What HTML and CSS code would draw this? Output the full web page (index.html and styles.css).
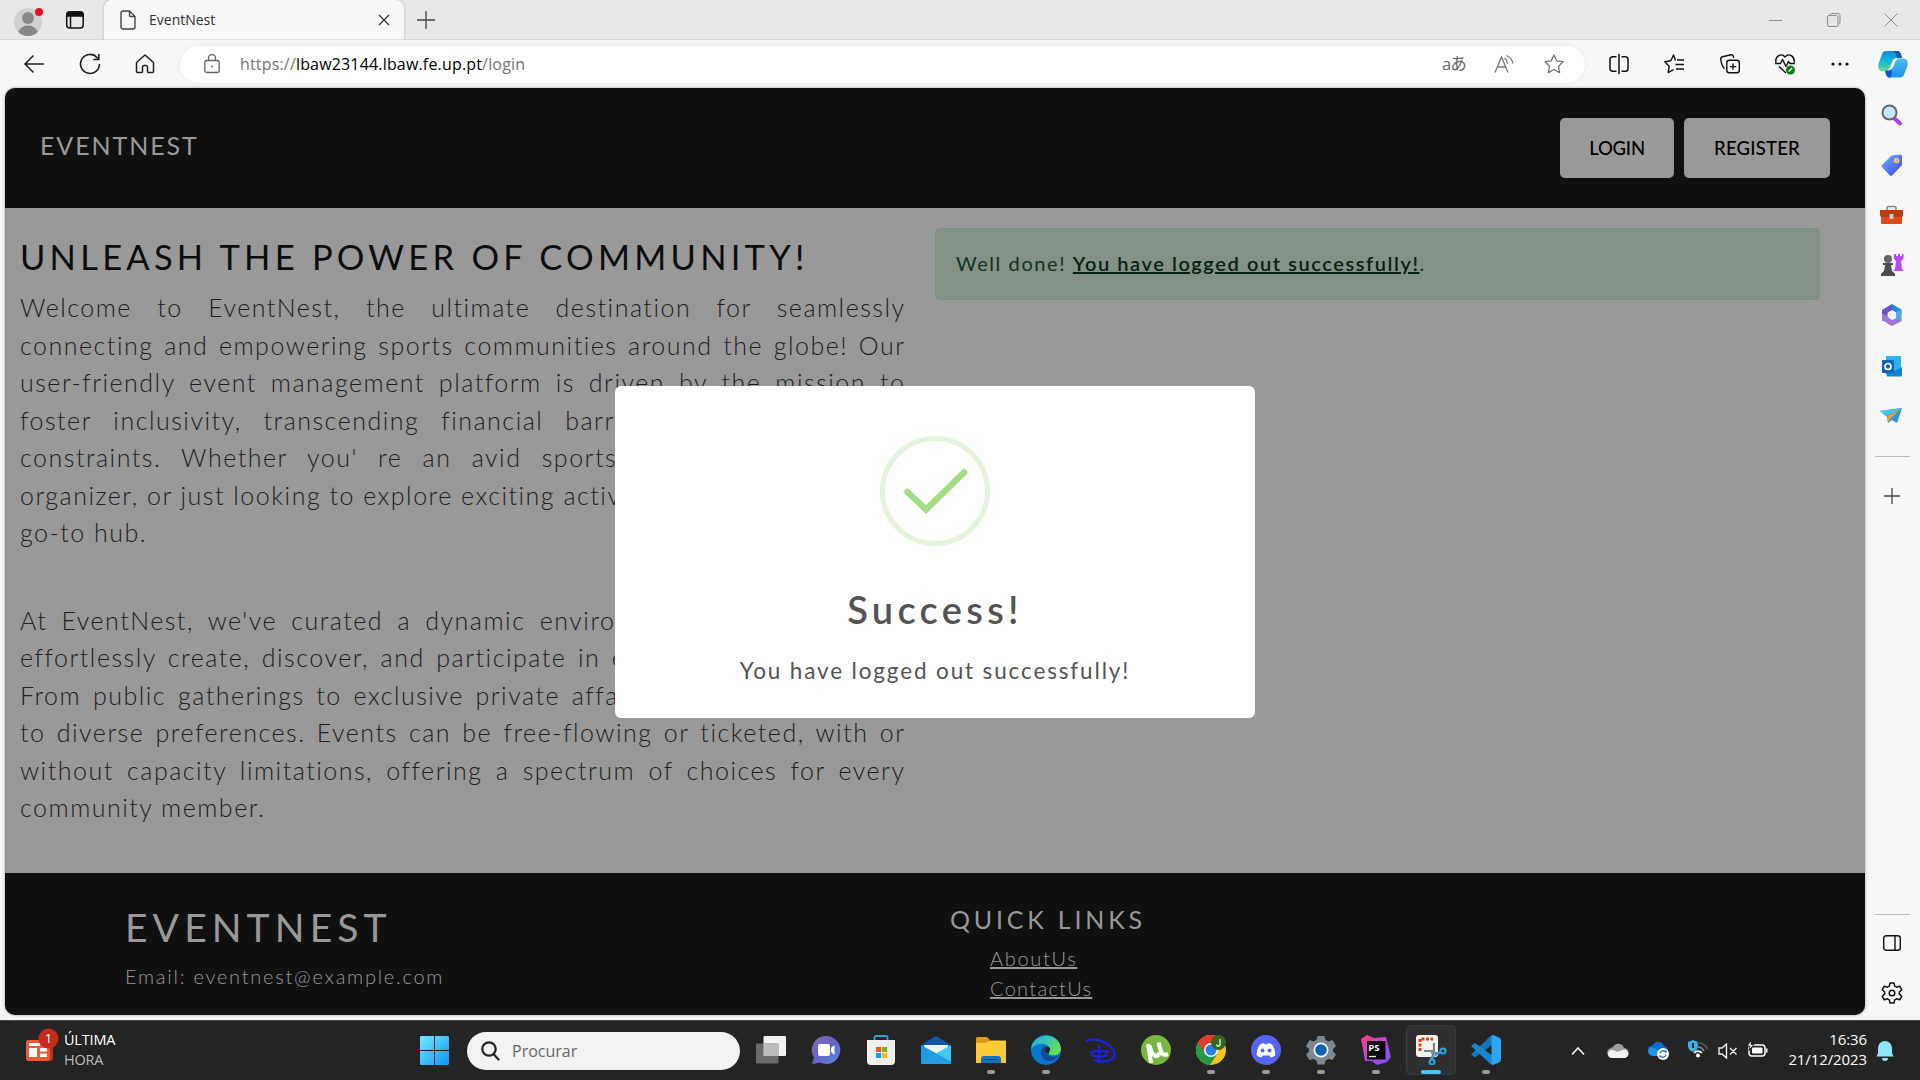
FILE: index.html
```html
<!DOCTYPE html>
<html lang="pt">
<head>
<meta charset="utf-8">
<title>EventNest</title>
<link rel="stylesheet" href="styles.css">
</head>
<body>
<div class="desktop">
  <div class="tabstrip">
    <div class="tab-tools">
      <svg class="avatar" width="30" height="36" viewBox="0 0 30 36"><defs><clipPath id="av"><circle cx="14" cy="20" r="14"/></clipPath></defs><g clip-path="url(#av)"><rect width="30" height="36" fill="#d2d0ce"/><circle cx="14" cy="16" r="6" fill="#8a8886"/><ellipse cx="14" cy="32" rx="10" ry="8.500" fill="#8a8886"/></g><circle cx="25" cy="10" r="4" fill="#e81123"/></svg>
      <svg width="20" height="20" viewBox="0 0 20 20" fill="none" stroke="#111" stroke-width="1.500"><rect x="1.700" y="2" width="16.500" height="16" rx="3"/><path d="M2 6V4.500A2.500 2.500 0 0 1 4.500 2h11A2.500 2.500 0 0 1 18 4.500V6z" fill="#111"/><path d="M5.500 6v12"/></svg>
    </div>
    <div class="tab">
      <svg width="16" height="20" viewBox="0 0 16 20" fill="none" stroke="#444" stroke-width="1.400"><path d="M3 1h6.500L15 6.500V17a2 2 0 0 1-2 2H3a2 2 0 0 1-2-2V3a2 2 0 0 1 2-2zM9.500 1v4.500a1 1 0 0 0 1 1H15"/></svg>
      <span class="tab-title">EventNest</span>
      <svg width="12" height="12" viewBox="0 0 12 12" stroke="#333" stroke-width="1.300"><path d="M1 1l10 10M11 1L1 11"/></svg>
    </div>
    <svg class="newtab" width="18" height="18" viewBox="0 0 18 18" stroke="#444" stroke-width="1.300"><path d="M9 0v18M0 9h18"/></svg>
    <div class="win">
      <svg width="14" height="14" viewBox="0 0 14 14" fill="none" stroke="#8c8c8c"><path d="M0 7.500h13"/></svg>
      <svg width="14" height="14" viewBox="0 0 14 14" fill="none" stroke="#8c8c8c"><rect x=".5" y="2.500" width="10.500" height="11" rx="1.500"/><path d="M3 2.500V2A1.500 1.500 0 0 1 4.500.5H11A2 2 0 0 1 13 2.500V9.500a1.500 1.500 0 0 1-1.500 1.500"/></svg>
      <svg width="14" height="14" viewBox="0 0 14 14" fill="none" stroke="#8c8c8c"><path d="M.5.5l13 13M13.500.5l-13 13"/></svg>
    </div>
  </div>

  <div class="toolbar">
    <div class="nav">
      <svg width="22" height="20" viewBox="0 0 22 20" fill="none" stroke="#222" stroke-width="1.500"><path d="M21 10H2M10.500 1.500L2 10l8.500 8.500"/></svg>
      <svg width="22" height="22" viewBox="0 0 22 22" fill="none" stroke="#222" stroke-width="1.600"><path d="M20.500 11A9.500 9.500 0 1 1 18 4.500L19.500 6M19.800 1v5.500h-5.500"/></svg>
      <svg width="20" height="20" viewBox="0 0 20 20" fill="none" stroke="#222" stroke-width="1.500" stroke-linejoin="round"><path d="M1.500 8.500L10 1l8.500 7.500V17.500a1 1 0 0 1-1 1H13.500a1 1 0 0 1-1-1V13a1.500 1.500 0 0 0-1.500-1.500H9A1.500 1.500 0 0 0 7.500 13v4.500a1 1 0 0 1-1 1h-4a1 1 0 0 1-1-1z"/></svg>
    </div>
    <div class="address">
      <svg width="16" height="20" viewBox="0 0 16 20" fill="none" stroke="#666" stroke-width="1.300"><rect x=".8" y="6.500" width="14.400" height="12" rx="2"/><path d="M4.500 6.500V4a3.500 3.500 0 0 1 7 0v2.500"/><circle cx="8" cy="12.500" r="1" fill="#666" stroke="none"/></svg>
      <span class="url"><span class="dim">https://</span>lbaw23144.lbaw.fe.up.pt<span class="dim">/login</span></span>
      <div class="addr-icons">
        <span class="translate">aあ</span>
        <svg width="20" height="20" viewBox="0 0 20 20" fill="none" stroke="#777" stroke-width="1.300"><path d="M1 18.500L7.500 3 14 18.500M3.500 13h8M10.500 4a8 8 0 0 1 3 6M12.500 1.500A10 10 0 0 1 18.800 9.500"/></svg>
        <svg width="20" height="20" viewBox="0 0 20 20" fill="none" stroke="#777" stroke-width="1.300" stroke-linejoin="round"><path d="M10 1l2.800 5.800 6.200.9-4.500 4.500 1.100 6.400L10 15.500l-5.600 3.100 1.100-6.400L1 7.700l6.200-.9z"/></svg>
      </div>
    </div>
    <div class="tools">
      <svg width="20" height="20" viewBox="0 0 20 20" fill="none" stroke="#111" stroke-width="1.500"><path d="M7.500 2.700H3.500A2.500 2.500 0 0 0 1 5.200v9.600a2.500 2.500 0 0 0 2.500 2.500h4M12.500 2.700h4A2.500 2.500 0 0 1 19 5.200v9.600a2.500 2.500 0 0 1-2.500 2.500h-4M10 0v20"/></svg>
      <svg width="20" height="20" viewBox="0 0 20 20" fill="none" stroke="#111" stroke-width="1.400" stroke-linejoin="round"><path d="M11.500 6.500L9.500 1 6.800 6.800.8 7.700l4.400 4.500-1 6.400 5.300-3.100M13 6h7M11.500 10.500H20M12 15h8"/></svg>
      <svg width="20" height="20" viewBox="0 0 20 20" fill="none" stroke="#111" stroke-width="1.400"><rect x="6.800" y="6.300" width="12.500" height="12.500" rx="2.500"/><path d="M13 9.500v6.300M9.800 12.600h6.400M4.500 14.500C3 14 1 9 .7 5A2 2 0 0 1 2.500 2.800L11 .8a2 2 0 0 1 2.400 1.500l.3 1.500"/></svg>
      <svg width="20" height="22" viewBox="0 0 20 22" fill="none" stroke="#111" stroke-width="1.400" stroke-linejoin="round"><path d="M.9 9.500C-.2 3 6.500-.5 10 4c3.500-4.500 10-1 9.200 5.500M4 13.500l7 6.500M0 10.500h5.500l2-4 3.500 7 2.500-5 1.500 2h5"/><circle cx="15.500" cy="17" r="4.500" fill="#107c10" stroke="none"/><path d="M13.700 18.500l3.500-3.500" stroke="#fff"/></svg>
      <svg width="18" height="4" viewBox="0 0 18 4" fill="#111"><circle cx="2" cy="2" r="1.600"/><circle cx="9" cy="2" r="1.600"/><circle cx="16" cy="2" r="1.600"/></svg>
      <svg width="30" height="28" viewBox="0 0 30 28"><defs><linearGradient id="c1" x1="0" y1="0" x2="0" y2="1"><stop offset="0" stop-color="#1a8ad8"/><stop offset=".5" stop-color="#12b5dc"/><stop offset="1" stop-color="#5fe08c"/></linearGradient><linearGradient id="c2" x1="0" y1="0" x2="0" y2="1"><stop offset="0" stop-color="#55b7f5"/><stop offset="1" stop-color="#1496ee"/></linearGradient></defs><path d="M8 1h11c3 0 3.500 2 4.500 5l.5 2H19c-2.500 0-3 2-4 5l-2 5c-1 2.500-2 3-4 3H5c-4 0-5.500-3-4.500-7L4 4c.8-2.200 2-3 4-3z" fill="url(#c1)"/><path d="M15 1h4c3 0 3.500 2 4.500 5l.5 2h-5c-1-3-1.500-6-4-7z" fill="#135ea8"/><path d="M22 27.500H12c-3 0-3.600-2-4.500-5L7 20.800h3c2.500 0 3.500-1.500 4.500-4.800l1.800-4.500c.8-2 1.700-3 3.700-3h5c4 0 5.500 3 4.500 7L26 24.500c-.8 2.200-2 3-4 3z" fill="url(#c2)"/><path d="M7 20.800h3c1.500 0 2.500-.5 3.500-2 .5 4 .5 7.500-1.500 8.700-3 0-3.600-2-4.500-5z" fill="#1252cf"/><path d="M16 9h4c-2 1-3 3-4 6s-2 4.500-4.500 4.500H10c2-1.500 2.500-3.500 3.500-6 .7-2 1.200-3.500 2.500-4.500z" fill="#f7f7f7"/></svg>
    </div>
  </div>

  <div class="main">
    <div class="page">
      <header class="site-header">
        <span class="brand">EVENTNEST</span>
        <div class="auth"><span class="btn login">LOGIN</span><span class="btn register">REGISTER</span></div>
      </header>
      <section class="content">
        <div class="intro">
          <h1>UNLEASH THE POWER OF COMMUNITY!</h1>
          <p>
            <span>Welcome to EventNest, the ultimate destination for seamlessly</span>
            <span>connecting and empowering sports communities around the globe! Our</span>
            <span>user-friendly event management platform is driven by the mission to</span>
            <span class="part w1">foster inclusivity, transcending financial barriers</span>
            <span class="part w2">constraints. Whether you' re an avid sports</span>
            <span class="part w3">organizer, or just looking to explore exciting activities</span>
            <span class="end">go-to hub.</span>
          </p>
          <p>
            <span class="part w4">At EventNest, we've curated a dynamic environment</span>
            <span class="part w5">effortlessly create, discover, and participate in events</span>
            <span class="part w6">From public gatherings to exclusive private affairs</span>
            <span>to diverse preferences. Events can be free-flowing or ticketed, with or</span>
            <span>without capacity limitations, offering a spectrum of choices for every</span>
            <span class="end">community member.</span>
          </p>
        </div>
        <div class="alert">Well done! <a>You have logged out successfully!</a>.</div>
      </section>
      <footer class="site-footer">
        <div class="foot-brand">
          <div class="foot-title">EVENTNEST</div>
          <div class="email">Email: eventnest@example.com</div>
        </div>
        <div class="foot-links">
          <div class="quick">QUICK LINKS</div>
          <a class="l1">AboutUs</a>
          <a class="l2">ContactUs</a>
        </div>
      </footer>
      <div class="modal">
        <svg class="check" width="110" height="110" viewBox="0 0 110 110" fill="none"><circle cx="55" cy="55" r="52.500" stroke="#e4f4da" stroke-width="5"/><path d="M27.500 56L46 73.500 84 36.500" stroke="#a5dc86" stroke-width="6.500" stroke-linecap="round"/></svg>
        <div class="modal-title">Success!</div>
        <div class="modal-text">You have logged out successfully!</div>
      </div>
    </div>
    <aside class="sidebar">
      <div class="cell"><svg width="22" height="22" viewBox="0 0 22 22"><path d="M13 14l6 5.500" stroke="#b83df5" stroke-width="4" stroke-linecap="round"/><circle cx="8.500" cy="8.500" r="7" fill="#c5e6fb" stroke="#666" stroke-width="2"/></svg></div>
      <div class="cell"><svg width="22" height="22" viewBox="0 0 22 22"><defs><linearGradient id="tg" x1="0" y1="0" x2="1" y2="1"><stop offset="0" stop-color="#6fb0ff"/><stop offset="1" stop-color="#3d45f0"/></linearGradient></defs><path d="M10.500 1.500L19 .5a2 2 0 0 1 2 2V11l-9.500 10a2 2 0 0 1-3 0L1.500 13.500a2 2 0 0 1 0-3z" fill="url(#tg)"/><circle cx="15.500" cy="6.500" r="2" fill="#9ab7ef" stroke="#ffd31c" stroke-width="1.500"/></svg></div>
      <div class="cell"><svg width="24" height="20" viewBox="0 0 24 20"><path d="M7 6V3a1.500 1.500 0 0 1 1.500-1.500h6A1.500 1.500 0 0 1 16 3v3" fill="none" stroke="#888" stroke-width="1.700"/><rect x="1" y="10" width="21" height="9" rx="1" fill="#dc4a1c"/><path d="M0 5h23v5a2 2 0 0 1-2 2H2a2 2 0 0 1-2-2z" fill="#c03b10"/><rect x="9.500" y="9" width="4" height="5" rx="1" fill="#ccc"/></svg></div>
      <div class="cell"><svg width="24" height="24" viewBox="0 0 24 24"><path d="M14 1h2v2h2V1h2v2h2V1h1.500v5L21 8l1 8 1.500 2H13l2-2 1-8-2-2z" fill="#bb48f5"/><circle cx="8" cy="6" r="4" fill="#666"/><path d="M3 10h10v2h-2l1 6 3 2.500V23H1v-2.500L4 18l1-6H3z" fill="#4c4c4c"/></svg></div>
      <div class="cell"><svg width="22" height="22" viewBox="0 0 22 22"><path d="M11 0l9.500 5.500v5L15 8.500 11 6z" fill="#2a85dc"/><path d="M11 0v6L6.500 9v6L1 17V6z" fill="#6157c9"/><path d="M20.500 5.500v11L11 22l-5-3 9-5V8z" fill="#55a5ed"/><path d="M1 16V9.500l5.500 3L11 16l9.500-1v2L11 22z" fill="#a276d6"/><circle cx="11" cy="11" r="4" fill="#f7f7f7"/></svg></div>
      <div class="cell"><svg width="22" height="22" viewBox="0 0 22 22"><rect x="5" y="1" width="15" height="19" rx="1" fill="#32b2ee"/><path d="M5 13l8 3 8-4v8a1.500 1.500 0 0 1-1.500 1.500H6z" fill="#1584d5"/><rect x="1" y="5" width="12" height="13" rx="1" fill="#0d66bd"/><circle cx="7" cy="11.500" r="3" fill="none" stroke="#fff" stroke-width="1.700"/></svg></div>
      <div class="cell"><svg width="24" height="18" viewBox="0 0 24 18"><path d="M0 4l22-3-5 15-5-3-4 3-1-6z" fill="#2795ee"/><path d="M0 4l22-3L7 9z" fill="#42c2f4"/><path d="M22 1L7 9.500l1.500 6 2-4z" fill="#f0a014"/></svg></div>
      <hr class="line top">
      <div class="plus"><svg width="16" height="16" viewBox="0 0 16 16" stroke="#444" stroke-width="1.300"><path d="M8 0v16M0 8h16"/></svg></div>
      <div class="grow"></div>
      <hr class="line">
      <div class="cell b"><svg width="18" height="16" viewBox="0 0 18 16" fill="none" stroke="#111" stroke-width="1.400"><rect x=".7" y=".7" width="16.600" height="14.600" rx="2.500"/><path d="M12 1v14"/></svg></div>
      <div class="cell g"><svg width="22" height="22" viewBox="0 0 22 22" fill="none" stroke="#111" stroke-width="1.500" stroke-linejoin="round"><path d="M9 1h4l.7 3.200 1.800 1 3.200-1 2 3.500L18.300 10v2l2.400 2.300-2 3.500-3.200-1-1.800 1L13 21H9l-.7-3.200-1.800-1-3.200 1-2-3.500L3.700 12v-2L1.300 7.700l2-3.500 3.200 1 1.800-1z"/><circle cx="11" cy="11" r="2.800"/></svg></div>
    </aside>
  </div>

  <div class="taskbar">
    <div class="widget">
      <svg width="38" height="36" viewBox="0 0 38 36"><rect x="0" y="12" width="27" height="21" rx="3" fill="#b9331a"/><rect x="0" y="12" width="24" height="21" rx="3" fill="#ee5a35"/><path d="M3 15h11v3H3zM3 20h8v9H3zM14 20h7v3.500h-7zM14 25.500h7V29h-7z" fill="#fff"/><circle cx="22.500" cy="10.500" r="10" fill="#c42b1c"/><text x="22.500" y="15" text-anchor="middle" class="badge-num">1</text></svg>
      <div class="news"><b>ÚLTIMA</b><span>HORA</span></div>
    </div>
    <svg class="start" width="29" height="29" viewBox="0 0 29 29"><defs><linearGradient id="wg" x1="0" y1="0" x2="1" y2="1"><stop offset="0" stop-color="#74ebff"/><stop offset="1" stop-color="#0c94fa"/></linearGradient></defs><path d="M1 0h13v14H0V1zM15 0h13l1 1v13H15zM0 15h14v14H1l-1-1zM15 15h14v13l-1 1H15z" fill="url(#wg)"/></svg>
    <div class="search"><svg width="19" height="20" viewBox="0 0 19 20" fill="none" stroke="#222" stroke-width="2.200" stroke-linecap="round"><circle cx="8" cy="8" r="6.700"/><path d="M13 13.500l4.500 5"/></svg><span>Procurar</span></div>
    <div class="apps">
      <div class="app"><svg width="30" height="30" viewBox="0 0 30 30"><rect x="7.500" y="1" width="22.500" height="20" rx="1" fill="#f2f2f2"/><rect x="0" y="8.500" width="22.500" height="20" rx="1" fill="#777" opacity=".85"/><path d="M7.500 8.500h15V21h-15z" fill="#bcbcbc"/></svg></div>
      <div class="app"><svg width="30" height="30" viewBox="0 0 30 30"><defs><linearGradient id="ch" x1="0" y1="0" x2="1" y2="1"><stop offset="0" stop-color="#8b67b0"/><stop offset=".5" stop-color="#6264c6"/><stop offset="1" stop-color="#5a8be8"/></linearGradient></defs><path d="M15 1a14 14 0 1 1-6 26.500L1 29l2-6.500A14 14 0 0 1 15 1z" fill="url(#ch)"/><rect x="7" y="9" width="12" height="12" rx="2" fill="#fff"/><path d="M20 13l3.500-3v10L20 17z" fill="#fff"/></svg></div>
      <div class="app"><svg width="30" height="30" viewBox="0 0 30 30"><path d="M8.500 6V2.500A1.500 1.500 0 0 1 10 1h10a1.500 1.500 0 0 1 1.500 1.500V6" fill="none" stroke="#25a7dc" stroke-width="1.800"/><path d="M1 5h28v21a4 4 0 0 1-4 4H5a4 4 0 0 1-4-4z" fill="#efefef"/><path d="M10 12h5v5h-5z" fill="#f25022"/><path d="M16 12h5v5h-5z" fill="#7fba00"/><path d="M10 18h5v5h-5z" fill="#00a4ef"/><path d="M16 18h5v5h-5z" fill="#ffb900"/></svg></div>
      <div class="app"><svg width="30" height="30" viewBox="0 0 30 30"><path d="M0 10L15 1l15 9v5H0z" fill="#0c59a5"/><path d="M3 10h24v6L15 21 3 16z" fill="#f2f2f2"/><path d="M0 10l30 16.500V29H0z" fill="#1d9ae0"/><path d="M30 10v17L15 18.500z" fill="#3cc8f4"/><path d="M0 29l15-10.500L30 29z" fill="#239fe6"/></svg></div>
      <div class="app run"><svg width="30" height="30" viewBox="0 0 30 30"><path d="M0 3.500A1.500 1.500 0 0 1 1.500 2H11l3 3-3 3H0z" fill="#dc9b0c"/><path d="M0 8h9.500l4-2.500H30V28H0z" fill="#ffca38"/><path d="M5 28v-4a3 3 0 0 1 3-3h14a3 3 0 0 1 3 3v4z" fill="#1474c4"/><path d="M8.500 24.500h13" stroke="#0b4a85"/></svg></div>
      <div class="app run"><svg width="30" height="30" viewBox="0 0 30 30"><defs><linearGradient id="eg" x1="0" y1="0" x2="1" y2=".6"><stop offset="0" stop-color="#2aa8e8"/><stop offset=".5" stop-color="#35c8b6"/><stop offset="1" stop-color="#68e04c"/></linearGradient></defs><circle cx="15" cy="15" r="15" fill="#0a76d0"/><path d="M0 14C1-2 27-5 30 13c0 8-9 8.500-12 6-1-1.500 1-2 1-5C18 8 6 6 0 14z" fill="url(#eg)"/><path d="M10 17c0-4 3-6 6-6-3 4-2 9 4 10.500 3 .5 6 0 8-1.500-5 9-18 8-18-3z" fill="#124c92"/><path d="M15 12c2-1 4 0 4 2 0 3-2 3.500-1 5-4-1-5-4-3-7z" fill="#252525"/></svg></div>
      <div class="app"><svg width="30" height="30" viewBox="0 0 30 30" fill="none" stroke="#1c22ea" stroke-width="2.300" stroke-linecap="round"><path d="M1 6.500C-.5 4 10 3 18 7c7 3.500 11 9 10.500 13.500C27.500 26 16 28 9 25.500M13 11.500v15.500M21.500 17c-5-1.500-16-2-16 1.500 0 3 10 4.500 15 1.500"/></svg></div>
      <div class="app"><svg width="30" height="30" viewBox="0 0 30 30"><circle cx="15" cy="15" r="15" fill="#76b83f"/><path d="M7 9l3 19M8.500 10.500C11 23 18 23 18.500 17M17.500 7.500C20 18 21 21.500 27 19" fill="none" stroke="#fff" stroke-width="4.200"/></svg></div>
      <div class="app run"><svg width="30" height="30" viewBox="0 0 30 30"><circle cx="15" cy="15" r="15" fill="#fbc116"/><path d="M15 15L2 7.500A15 15 0 0 0 14 30l7.500-11.500z" fill="#229a47"/><path d="M2 7.500A15 15 0 0 1 28 7.500L28 9H15l-6.500 9.700z" fill="#e33b2e"/><circle cx="15" cy="15" r="7" fill="#fff"/><circle cx="15" cy="15" r="5.500" fill="#2b7de9"/><circle cx="22.500" cy="7.500" r="7.500" fill="#33691e"/><path d="M24 4v5.500a1.700 1.700 0 0 1-3.400 0" fill="none" stroke="#fff" stroke-width="1.200"/></svg></div>
      <div class="app run"><svg width="30" height="30" viewBox="0 0 30 30"><circle cx="15" cy="15" r="15" fill="#5865f2"/><path d="M9 9.500c2-1 3-1.300 4-1.500l.7 1.300h2.600L17 8c1 .2 2 .5 4 1.500 2.500 3.500 3.500 7 3.200 11-1.500 1-3 1.800-4.700 2L18.300 20.500h-6.600L10.500 22.500c-1.700-.2-3.200-1-4.700-2-.3-4 .7-7.500 3.200-11z" fill="#fff"/><circle cx="11.500" cy="15.500" r="2" fill="#5865f2"/><circle cx="18.500" cy="15.500" r="2" fill="#5865f2"/></svg></div>
      <div class="app run"><svg width="30" height="30" viewBox="0 0 30 30"><path d="M11.500 1h7l1 4 3 1.500L26.500 5 30 11l-3 3v2.500l3 3L26.500 25l-4-1-3 1.500-1 4h-7l-1-4-3-1.500-4 1L0 19.500l3-3V14l-3-3L3.500 5l4 1.500 3-1.500z" fill="#7d8791"/><circle cx="15" cy="15" r="7.500" fill="#f2f2f2"/><circle cx="15" cy="15" r="5.800" fill="#0d62b5"/></svg></div>
      <div class="app run"><svg width="30" height="30" viewBox="0 0 30 30"><defs><linearGradient id="pg" x1="0" y1="0" x2="1" y2="1"><stop offset="0" stop-color="#ff3e7c"/><stop offset=".5" stop-color="#c342e0"/><stop offset="1" stop-color="#6b57ff"/></linearGradient></defs><path d="M0 4L6 0l7 3 12-1 2 8 3 12-4 5-10 3-5-4-7 0-2-12z" fill="url(#pg)"/><rect x="6" y="6" width="18.500" height="18.500" fill="#080808"/><text x="7.300" y="15.500" class="ps">PS</text><path d="M8 21.500h7" stroke="#fff" stroke-width="1.300"/></svg></div>
      <div class="app active"><svg width="32" height="30" viewBox="0 0 32 30"><rect x="1" y="0" width="22" height="22" rx="3" fill="#f2f2f2"/><path d="M5 16V4h13" fill="none" stroke="#d9480f" stroke-width="3" stroke-dasharray="3 1.500"/><path d="M9 16h11M19 8v10l-3 6M16 18h9" fill="none" stroke="#7b858e" stroke-width="2.200"/><circle cx="28" cy="16" r="2.600" fill="none" stroke="#2ba3e3" stroke-width="2"/><circle cx="17" cy="27" r="2.500" fill="none" stroke="#2ba3e3" stroke-width="2"/><path d="M20 20l5.500-3M19 20l-2 5" stroke="#2ba3e3" stroke-width="2"/></svg></div>
      <div class="app run"><svg width="30" height="30" viewBox="0 0 30 30"><path d="M22 0v9L4 22.500 0 19.500 19.500 1z" fill="#1377bd"/><path d="M22 30v-9L4 8 0 11l19.500 18z" fill="#1a86d0"/><path d="M22 0l6 2.500a3 3 0 0 1 2 2.500v20a3 3 0 0 1-2 2.500L22 30l-1.500-1V1z" fill="#2aa6f2"/></svg></div>
    </div>
    <div class="tray">
      <svg width="16" height="10" viewBox="0 0 16 10" fill="none" stroke="#eee" stroke-width="1.700"><path d="M2 8.500L8 2l6 6.500"/></svg>
      <svg class="t2" width="22" height="16" viewBox="0 0 22 16"><path d="M6 4a6 6 0 0 1 11 1 5 5 0 0 1 2.500 9H4A4.500 4.500 0 0 1 2 6z" fill="#9d9d9d"/><path d="M4 15a4 4 0 0 1-1-7.500c3-1 5 0 7 1.500l7-2.500a4.300 4.300 0 0 1 1 8.500z" fill="#f2f2f2"/></svg>
      <svg class="t3" width="22" height="20" viewBox="0 0 22 20"><path d="M5 4a6 6 0 0 1 11 1 5 5 0 0 1 2 9H4.500A4.500 4.500 0 0 1 3 5z" fill="#0c6bcb"/><path d="M4.500 15A4.500 4.500 0 0 1 3 6.500C6 6 9 9 11 10v5z" fill="#2294ec"/><circle cx="15" cy="13" r="6" fill="#fff"/><path d="M12 12.500a3.200 3.200 0 0 1 6-1v-2M18 13.500a3.200 3.200 0 0 1-6 1v2" fill="none" stroke="#1a73c8" stroke-width="1.300"/></svg>
      <svg class="t4" width="22" height="18" viewBox="0 0 22 18" fill="none"><path d="M0 2l5-2 5 2v4c0 3-2 5-5 6-3-1-5-3-5-6z" fill="#3cb1e8"/><path d="M5 3v5" stroke="#124" stroke-width="2"/><path d="M9 3c6-.5 9 3 10.500 6" stroke="#555" stroke-width="1.700"/><path d="M10 7c3 0 5 2 6 4" stroke="#888" stroke-width="1.700"/><path d="M6 13q4-4 8 0" stroke="#fff" stroke-width="1.700"/><circle cx="10" cy="15.500" r="2" fill="#fff"/></svg>
      <svg class="t5" width="20" height="16" viewBox="0 0 20 16" fill="none" stroke="#eee" stroke-width="1.400"><path d="M1 5h3l4.500-4v14L4 11H1zM12 5l6.500 6.500M18.500 5L12 11.500"/></svg>
      <svg class="t6" width="22" height="18" viewBox="0 0 22 18"><rect x="2" y="5" width="16" height="11" rx="3" fill="none" stroke="#fff" stroke-width="1.500"/><rect x="5" y="7.500" width="10.500" height="6" rx="1" fill="#fff"/><path d="M19 8.500h1.500v4H19z" fill="#fff"/><path d="M4.500 0L0 6h3l-1 4.500L7 4.500H4z" fill="#fff" stroke="#252525"/></svg>
    </div>
    <div class="clock"><span>16:36</span><span>21/12/2023</span></div>
    <svg class="bell" width="18" height="20" viewBox="0 0 18 20"><path d="M9 0a7 7 0 0 1 7 7v5l1.500 3.500H.5L2 12V7a7 7 0 0 1 7-7zM6 17h6a3 3 0 0 1-6 0z" fill="#91e6fb"/></svg>
  </div>
</div>
</body>
</html>
```
FILE: styles.css
```css
* { box-sizing: border-box; }
body { margin: 0; background: #f7f7f7; overflow: hidden; }
svg { display: block; flex: none; }
.desktop { width: 1920px; height: 1080px; display: flex; flex-direction: column; font-family: "Open Sans", "Noto Sans", "Noto Sans CJK JP", sans-serif; }

.tabstrip { height: 40px; background: #e8e8e8; border-bottom: 1px solid #d6d6d6; display: flex; align-items: center; }
.tab-tools { width: 104px; display: flex; align-items: center; gap: 21px; padding-left: 14px; }
.tab { width: 300px; height: 40px; background: #f7f7f7; border-radius: 8px 8px 0 0; box-shadow: 0 0 3px rgba(0,0,0,.25); clip-path: inset(0 -4px 0 -4px); display: flex; align-items: center; padding: 0 14px 0 16px; }
.tab-title { flex: 1; margin-left: 13px; font-size: 14px; letter-spacing: 0; color: #333; }
.newtab { margin-left: 13px; }
.win { margin-left: auto; display: flex; gap: 43.500px; padding-right: 22px; }

.toolbar { height: 48px; display: flex; align-items: center; }
.nav { width: 180px; flex: none; display: flex; align-items: center; gap: 34px; padding-left: 23px; }
.address { width: 1405px; flex: none; height: 37px; border-radius: 19px; background: #fff; box-shadow: 0 0 4px rgba(0,0,0,.07); display: flex; align-items: center; padding: 0 21px 0 24px; }
.url { margin-left: 20px; font-size: 16px; color: #000; letter-spacing: .17px; }
.dim { color: #777; }
.addr-icons { margin-left: auto; display: flex; align-items: center; gap: 30px; }
.translate { font-size: 16.500px; line-height: 20px; color: #666; width: 22px; white-space: nowrap; letter-spacing: -1px; }
.tools { flex: 1; display: flex; align-items: center; gap: 35.400px; padding-left: 24px; }
.tools svg:last-child { margin-left: -6px; }

.main { height: 932px; display: flex; padding-left: 5px; }
.page { width: 1860px; height: 927px; border-radius: 10px; overflow: hidden; position: relative; background: #999; font-family: Lato, "Open Sans", sans-serif; display: flex; flex-direction: column; box-shadow: 0 0 3px rgba(0,0,0,.4); }
.site-header { height: 120px; background: #101010; display: flex; align-items: center; justify-content: space-between; padding: 0 35px; }
.brand { font-size: 25px; color: #999; letter-spacing: 1.900px; margin-top: -6px; }
.auth { display: flex; gap: 10px; }
.btn { height: 60px; border-radius: 5px; background: #999; color: #000; display: flex; align-items: center; justify-content: center; font-size: 18.500px; font-weight: 500; }
.login { width: 114px; letter-spacing: -.2px; }
.register { width: 146px; letter-spacing: .2px; }
.content { height: 665px; display: flex; padding: 20px 45px 0 15px; gap: 31px; align-items: flex-start; }
.intro { width: 884px; }
h1 { margin: 8px 0 0; font-size: 34.500px; line-height: 42px; font-weight: 400; letter-spacing: 4.240px; color: #0c0c0c; white-space: nowrap; }
p { margin: 11px 0 50px; font-size: 25px; line-height: 37.500px; font-weight: 300; letter-spacing: 1.500px; color: #202020; }
p span { display: block; white-space: nowrap; text-align: justify; text-align-last: justify; margin-right: -1.500px; }
p .end, p .part { text-align-last: left; }
.w1 { word-spacing: 13.600px; }
.w2 { word-spacing: 12px; }
.w3 { word-spacing: 0; }
.w4 { word-spacing: 6px; }
.w5 { word-spacing: 3.300px; }
.w6 { word-spacing: 3.500px; }
.alert { width: 885px; height: 72px; border: 1px solid #719780; border-radius: 5px; background: #849187; color: #12301f; font-size: 20px; letter-spacing: 1.580px; padding: 0 20px; line-height: 68px; white-space: pre; }
.alert a { font-weight: 600; color: #07200f; text-decoration: underline; }
.site-footer { height: 142px; background: #101010; color: #999; display: flex; padding-left: 120px; }
.foot-brand { width: 825px; padding-top: 31px; }
.foot-title { font-size: 39px; line-height: 47px; letter-spacing: 5.100px; }
.email { font-size: 20px; line-height: 30px; margin-top: 10px; font-weight: 300; letter-spacing: 1.750px; }
.foot-links { display: flex; flex-direction: column; align-items: flex-start; padding-top: 31px; }
.quick { font-size: 25px; line-height: 30px; letter-spacing: 3.800px; }
.foot-links a { margin-left: 40px; font-size: 20px; line-height: 30px; font-weight: 300; letter-spacing: 1.300px; text-decoration: underline; }
.foot-links .l1 { margin-top: 9px; letter-spacing: 1.700px; }
.modal { position: absolute; left: 610px; top: 298px; width: 640px; height: 332px; border-radius: 6px; background: #fff; color: #545454; display: flex; flex-direction: column; align-items: center; }
.check { margin-top: 50px; }
.modal-title { margin-top: 40px; font-size: 38px; line-height: 46px; font-weight: 600; letter-spacing: 4.300px; }
.modal-text { margin-top: 22px; font-size: 22.500px; line-height: 34px; letter-spacing: 1.860px; }

.sidebar { width: 55px; display: flex; flex-direction: column; align-items: center; padding: 1.500px 1px 0 0; }
.cell { height: 50.200px; display: flex; align-items: center; }
.line { width: 35px; border: 0; border-top: 1px solid #bbb; margin: 0; }
.line.top { margin-top: 15px; }
.plus { padding-top: 31px; }
.grow { flex: 1; }
.cell.b { height: 55px; }
.cell.g { height: 46px; margin-bottom: 4px; }

.taskbar { height: 60px; background: #242424; border-top: 1px solid #484848; display: flex; align-items: center; color: #fff; }
.widget { width: 420px; display: flex; padding-left: 26px; align-items: center; }
.widget svg { margin-top: -10px; }
.badge-num { font-size: 13px; fill: #fff; }
.news { font-size: 14.500px; line-height: 20px; display: flex; flex-direction: column; letter-spacing: -.2px; margin-top: -2px; }
.news b { font-weight: 400; }
.news span { color: #bbb; }
.search { width: 273px; height: 38px; margin-left: 18px; border-radius: 19px; background: #f2f2f2; display: flex; align-items: center; padding-left: 14px; color: #666; font-size: 16px; }
.search span { margin-left: 12px; }
.apps { display: flex; margin-left: 3px; }
.app { width: 55px; height: 60px; display: flex; flex-direction: column; align-items: center; padding-top: 14px; }
.run::after { content: ""; width: 8px; height: 4px; border-radius: 2px; background: #9a9a9a; margin-top: 5px; }
.active { height: 50px; width: 50px; margin: 4px 2.500px; padding-top: 10px; background: #303030; border-radius: 5px; box-shadow: inset 0 0 0 1px #3a3a3a; }
.active::after { content: ""; width: 20px; height: 4px; border-radius: 2px; background: #4cc2ff; margin-top: 5px; }
.ps { font-size: 9.500px; font-weight: 700; fill: #fff; }
.tray { display: flex; align-items: center; margin-left: 57px; }
.t2 { margin-left: 21px; } .t3 { margin-left: 19px; } .t4 { margin-left: 18px; margin-top: -4px; } .t5 { margin-left: 8px; } .t6 { margin-left: 9px; margin-top: -4px; }
.clock { width: 98px; display: flex; flex-direction: column; align-items: flex-end; font-size: 15px; line-height: 20px; letter-spacing: -.1px; margin-top: -3px; }
.bell { margin-left: 9px; }
```
